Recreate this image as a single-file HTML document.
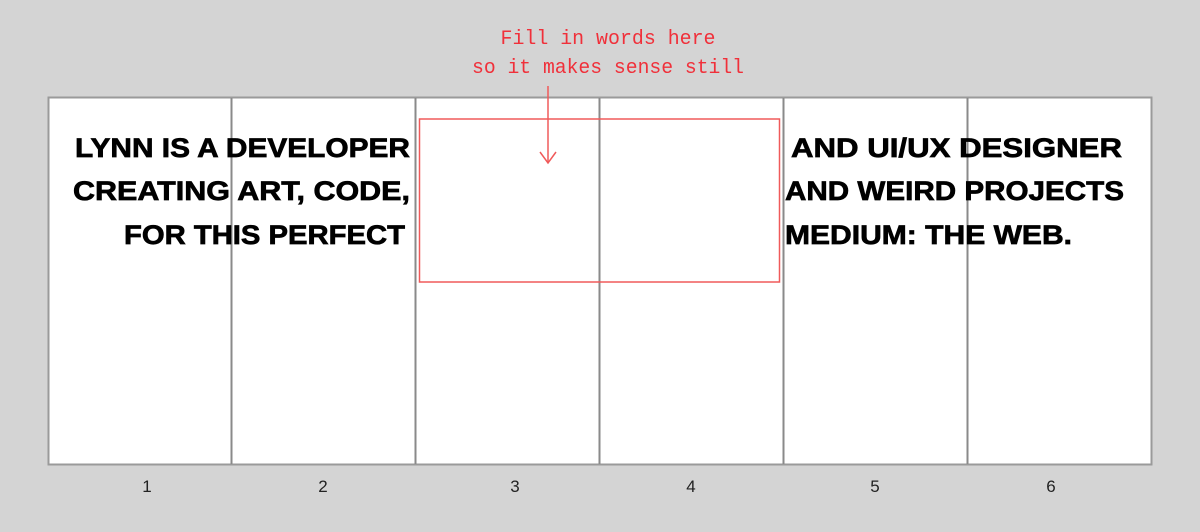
<!DOCTYPE html>
<html><head><style>
body{margin:0;width:1200px;height:527px;background:#d4d4d4;overflow:hidden}
</style></head><body>
<svg width="1200" height="527" xmlns="http://www.w3.org/2000/svg">
<rect x="0" y="0" width="1200" height="527" fill="#d4d4d4"/>
<rect x="48.5" y="97.5" width="1103" height="367" fill="#fff" stroke="#9a9a9a" stroke-width="2"/>
<g stroke="#8a8a8a" stroke-width="2">
<line x1="231.5" y1="98" x2="231.5" y2="464"/>
<line x1="415.5" y1="98" x2="415.5" y2="464"/>
<line x1="599.5" y1="98" x2="599.5" y2="464"/>
<line x1="783.5" y1="98" x2="783.5" y2="464"/>
<line x1="967.5" y1="98" x2="967.5" y2="464"/>
</g>
<g font-family="Liberation Sans, sans-serif" font-weight="bold" font-size="27" fill="#000" stroke="#000" stroke-width="0.7">
<text x="75" y="157" textLength="335" lengthAdjust="spacingAndGlyphs">LYNN IS A DEVELOPER</text>
<text x="73" y="200" textLength="337" lengthAdjust="spacingAndGlyphs">CREATING ART, CODE,</text>
<text x="124" y="244" textLength="281" lengthAdjust="spacingAndGlyphs">FOR THIS PERFECT</text>
<text x="791" y="157" textLength="331" lengthAdjust="spacingAndGlyphs">AND UI/UX DESIGNER</text>
<text x="785" y="200" textLength="339" lengthAdjust="spacingAndGlyphs">AND WEIRD PROJECTS</text>
<text x="785" y="244" textLength="287" lengthAdjust="spacingAndGlyphs">MEDIUM: THE WEB.</text>
</g>
<rect x="419.5" y="119" width="360" height="163" fill="none" stroke="#f05a5a" stroke-width="1.5"/>
<g stroke="#f05a5a" stroke-width="1.5" fill="none">
<line x1="548" y1="86" x2="548" y2="163"/>
<polyline points="540,152 548,163 556,152"/>
</g>
<g font-family="Liberation Mono, monospace" font-size="20" fill="#f0303a" text-anchor="middle">
<text x="608" y="44" textLength="215" lengthAdjust="spacingAndGlyphs">Fill in words here</text>
<text x="608" y="73" textLength="272" lengthAdjust="spacingAndGlyphs">so it makes sense still</text>
</g>
<g font-family="Liberation Sans, sans-serif" font-size="17" fill="#222" text-anchor="middle">
<text x="147" y="492">1</text>
<text x="323" y="492">2</text>
<text x="515" y="492">3</text>
<text x="691" y="492">4</text>
<text x="875" y="492">5</text>
<text x="1051" y="492">6</text>
</g>
</svg>
</body></html>
